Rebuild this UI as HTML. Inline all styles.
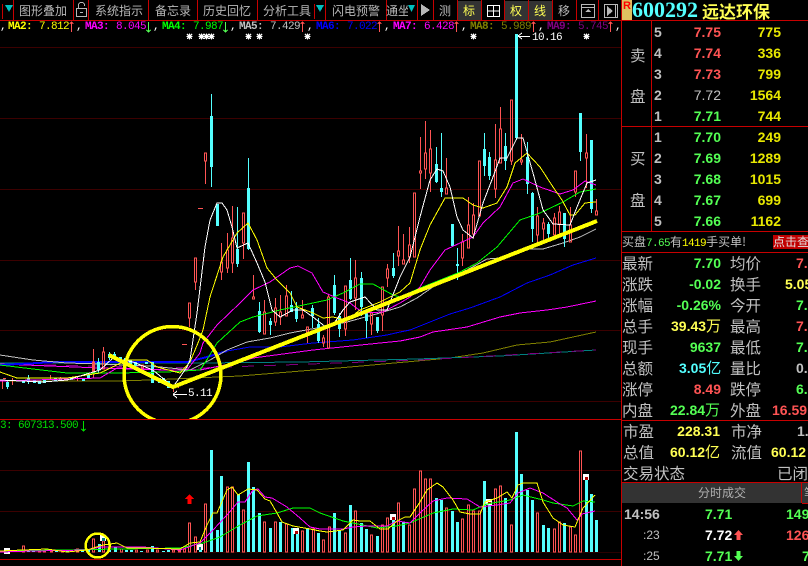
<!DOCTYPE html>
<html><head><meta charset="utf-8"><style>
html,body{margin:0;padding:0;background:#000;width:808px;height:566px;overflow:hidden}
#p{position:relative;width:808px;height:566px;overflow:hidden;background:#000;font-family:"Liberation Sans","WenQuanYi Zen Hei","Noto Sans CJK SC",sans-serif}
#p>div,#p>span{position:absolute;white-space:nowrap}
.c{font-family:"WenQuanYi Zen Hei","Noto Sans CJK SC",sans-serif;color:#c0c0c0;line-height:20px}
.tb{font-size:12px;top:0;height:20px;line-height:21px;color:#b8b8b8}
.l{font-size:15.5px}
.b{font-family:"Liberation Sans",sans-serif;font-weight:bold;font-size:14px;line-height:20px}
.m{font-family:"Liberation Mono",monospace;font-size:11px;letter-spacing:-.6px;line-height:14px;top:20px}
.r{color:#ff5454}.g{color:#54ff54}.y{color:#e8e800}.w{color:#c0c0c0}.yy{color:#ffff54}.cy{color:#54ffff}
</style></head><body><div id="p">
<svg width="808" height="566" style="position:absolute;left:0;top:0" shape-rendering="crispEdges" fill="none">
<defs><clipPath id="ch"><rect x="0" y="0" width="621" height="419"/></clipPath>
<g id="st"><circle r="2.2" fill="#fff"/><path d="M-3 0H3M0-3V3M-2.500-2.500L2.500 2.500M-2.500 2.500L2.500-2.500" stroke="#fff"/></g></defs>
<!-- grid -->
<path d="M0 47.500H621M0 118.500H621M0 189.500H621M0 260.500H621M0 330.500H621M0 401.500H621M0 470.500H621M0 511.500H621" stroke="#3c0000"/>
<path d="M0 552.500H621" stroke="#2a0000"/>
<!-- long MAs -->
<g clip-path="url(#ch)" stroke-width="1">
<polyline stroke="#808000" points="0,381 117,381 150,380 240,376 350,367 450,358 483,353 517,345 550,342 596,332"/>
<polyline stroke="#008080" points="0,363 200,363 300,362 417,359 500,356 596,350"/>
<polyline stroke="#800080" stroke-dasharray="12 10" points="0,364 200,368 420,360 596,350"/>
<polyline stroke="#ff00ff" points="0,364 100,368 167,370 200,370 240,362 253,358 313,350 380,343 400,341 420,337 433,332 467,327 500,317 520,313 547,310 567,307 596,301"/>
<polyline stroke="#0000ff" stroke-width="2" points="0,365 57,362 93,362 157,362 187,362 207,357 227,351"/>
<polyline stroke="#0000ff" points="227,351 250,347 280,347 313,343 353,340 387,335 400,332 410,330 430,322 450,314 470,308 500,297 527,283 550,275 573,265 596,258"/>
<polyline stroke="#c0c0c0" points="0,355 33,360 67,363 100,364 150,366 190,370 210,360 227,350 247,342 270,338 290,333 317,328 347,322 380,313 400,307 417,298 440,282 467,270 487,259 500,258 523,249 543,249 563,243 580,237 596,229"/>
</g>
<!-- candles cyan wicks -->
<path stroke="#54ffff" d="M211.500 94V187M237.500 207V267M248.500 158V250M259.500 302V333M270.500 318V335M291.500 291V312M296.500 302V322M312.500 305V328M318.500 318V343M334.500 275V315M339.500 313V337M350.500 258V300M361.500 272V316M366.500 313V338M377.500 317V333M393.500 253V278M436.500 147V183M441.500 133V197M457.500 248V280M484.500 133V176M489.500 152V180M505.500 133V170M527.500 142V194M532.500 192V242M548.500 222V240M564.500 213V247M580.500 113V161M591.500 140V213M516.500 34V140M7.500 380V389M28.500 375V384M88.500 373V378M98.500 358V373M109.500 352V360M114.500 352V360"/>
<path stroke="#54ffff" stroke-width="3" d="M211.500 116V167M217.500 204V226M237.500 249V264M248.500 188V249M259.500 311V332M270.500 321V325M291.500 305V312M296.500 308V319M312.500 308V316M318.500 324V341M334.500 285V313M339.500 316V329M350.500 280V299M361.500 278V307M366.500 313V321M377.500 317V331M393.500 268V276M436.500 164V182M441.500 188V192M452.500 224V246M457.500 264V266M484.500 149V166M489.500 157V176M505.500 146V161M516.500 34V138M527.500 157V184M532.500 193V229M548.500 224V234M564.500 213V239M580.500 113V152M591.500 140V209
M7.500 382V387M23.500 380V383M28.500 378V382M34.500 380V383M39.500 381V384M44.500 380V383M55.500 378V381M60.500 378V381M71.500 377V380M83.500 378V381M88.500 375V378M98.500 362V370M109.500 354V358M114.500 354V359M120.500 357V362M125.500 358V364M130.500 360V365M135.500 362V366M146.500 362V364M152.500 362V383M159.500 378V383M163.500 378V382M168.500 381V388"/>
<!-- candles red -->
<path stroke="#ff5454" d="M188.500 303h2v15h-2zM189.500 318V327M194.500 258h2v24h-2zM195.500 282V290M204.500 153h2v8h-2zM205.500 161V184M221.500 243V262M220.500 262h2v10h-2zM221.500 272V280M227.500 233V250M226.500 250h2v18h-2zM227.500 268V273M232.500 206V238M231.500 238h2v25h-2zM232.500 263V273M242.500 213h2v30h-2zM243.500 243V259M253.500 275V297M252.500 297h2v2h-2zM264.500 300V312M263.500 312h2v22h-2zM275.500 298V308M274.500 308h2v14h-2zM275.500 322V326M280.500 295V312M279.500 312h2v5h-2zM280.500 317V325M286.500 285V296M285.500 296h2v20h-2zM302.500 300V315M301.500 315h2v3h-2zM306.500 327h2v5h-2zM307.500 332V343M323.500 335V338M322.500 338h2v5h-2zM323.500 343V347M328.500 295V297M327.500 297h2v51h-2zM344.500 286h2v43h-2zM345.500 329V336M355.500 260V278M354.500 278h2v20h-2zM355.500 298V310M370.500 313h2v11h-2zM371.500 324V335M381.500 287h2v28h-2zM382.500 315V331M387.500 264V269M386.500 269h2v9h-2zM387.500 278V287M398.500 226V251M397.500 251h2v5h-2zM398.500 256V266M403.500 234V260M402.500 260h2v4h-2zM409.500 227V245M408.500 245h2v12h-2zM409.500 257V263M413.500 193h2v64h-2zM420.500 137V171M419.500 171h2v2h-2zM420.500 173V189M425.500 121V153M424.500 153h2v16h-2zM425.500 169V179M430.500 130V149M429.500 149h2v24h-2zM430.500 173V192M446.500 158V188M445.500 188h2v6h-2zM462.500 234V242M461.500 242h2v16h-2zM462.500 258V266M468.500 197V225M467.500 225h2v23h-2zM473.500 203V215M472.500 215h2v19h-2zM473.500 234V238M478.500 161h2v55h-2zM495.500 124V160M494.500 160h2v29h-2zM495.500 189V198M500.500 107V129M499.500 129h2v34h-2zM510.500 100h2v61h-2zM511.500 161V165M521.500 134V160M520.500 160h2v2h-2zM521.500 162V165M537.500 207V216M536.500 216h2v19h-2zM537.500 235V242M543.500 218V223M542.500 223h2v6h-2zM543.500 229V241M554.500 213V218M553.500 218h2v17h-2zM554.500 235V239M559.500 206V212M558.500 212h2v12h-2zM559.500 224V235M570.500 207V225M569.500 225h2v17h-2zM574.500 171h2v21h-2zM575.500 192V197M586.500 134V153M585.500 153h2v5h-2zM586.500 158V188M596.500 199V211M595.500 211h2v4h-2z
M2.500 380V389M12.500 378V385M50.500 375V380M60.500 377V381M77.500 376V381M93.500 349V378M92.500 362h2v11h-2zM102.500 352h2v17h-2zM103.500 347V352M141.500 365h2v3h-2zM173.500 386V392M178.500 383V388"/>
<path stroke="#ff5454" d="M198 208.500H203M182 344.500H187M3 378.500H6"/>
<!-- short MAs -->
<g clip-path="url(#ch)">
<polyline stroke="#00ff00" points="0,365 33,369 67,373 117,373 167,372 200,370 208,358 217,343 240,322 253,317 280,310 327,300 343,293 360,284 373,284 393,295 400,297 420,288 440,280 460,272 477,263 497,247 520,220 540,213 563,202 580,192 596,189"/>
<polyline stroke="#ff00ff" points="0,381 67,379 100,378 117,368 167,370 187,370 200,353 203,343 217,325 240,303 253,290 270,282 290,268 298,266 312,273 323,292 337,298 350,303 363,313 383,312 400,303 410,297 420,287 430,270 445,250 460,243 473,237 483,223 500,207 513,183 523,179 540,187 560,194 573,190 585,181 596,185"/>
<polyline stroke="#ffff00" points="0,372 17,378 67,378 100,373 127,360 147,360 157,367 180,373 190,362 198,343 203,330 210,297 223,257 237,233 248,223 257,240 267,268 277,280 290,293 297,307 313,313 323,318 333,317 347,320 360,310 380,302 400,292 410,283 420,250 430,225 445,198 463,198 473,205 483,208 497,203 507,187 515,163 527,153 540,167 553,187 562,200 570,215 575,215 585,203 596,202"/>
<polyline stroke="#ffffff" points="0,380 43,382 67,380 100,370 113,358 133,362 153,370 173,387 187,367 190,360 197,313 205,247 210,220 217,203 222,203 227,210 232,227 237,248 248,243 257,263 265,282 272,310 280,317 293,310 303,310 313,317 327,328 333,325 343,310 350,302 365,297 377,310 387,310 400,277 410,257 420,217 430,180 437,169 443,171 450,187 457,217 463,230 473,238 483,203 493,177 500,158 507,158 517,138 523,138 533,173 543,210 553,224 570,225 577,207 587,183 596,180"/>
<!-- drawn overlays -->
<circle cx="172.500" cy="375" r="48.500" stroke="#ffff00" stroke-width="3.500"/>
<path d="M109 355L173 387L597 221" stroke="#ffff00" stroke-width="4"/>
</g>
<path stroke="#fff" d="M173 394.500H187M173 394.500L177 391M173 394.500L177 398M518 36L522 33M518 36L522 39M518 36.500H530"/>
<!-- legend arrows -->
<path stroke="#ff5454" d="M71.500 22V32M69.500 24L71.500 22L73.500 24M302.500 22V32M300.500 24L302.500 22L304.500 24M379.500 22V32M377.500 24L379.500 22L381.500 24M456.500 22V32M454.500 24L456.500 22L458.500 24M533.500 22V32M531.500 24L533.500 22L535.500 24M610.500 22V32M608.500 24L610.500 22L612.500 24"/>
<path stroke="#54ff54" d="M148.500 22V32M146.500 30L148.500 32L150.500 30M225.500 22V32M223.500 30L225.500 32L227.500 30"/>
<path stroke="#00e000" d="M83.500 421V431M81.500 429L83.500 431L85.500 429"/>
<!-- stars -->
<use href="#st" x="189.500" y="36.500"/><use href="#st" x="201.500" y="36.500"/><use href="#st" x="206.500" y="36.500"/><use href="#st" x="211.500" y="36.500"/><use href="#st" x="248.500" y="36.500"/><use href="#st" x="259.500" y="36.500"/><use href="#st" x="307.500" y="36.500"/><use href="#st" x="473.500" y="36.500"/><use href="#st" x="586.500" y="36.500"/>
<!-- volume cyan -->
<path stroke="#54ffff" stroke-width="3" d="M28.500 551V552M33.500 551V552M56.500 551V552M67.500 551V552M72.500 551V552M82.500 551V552M88.500 549V552M99.500 544V552M109.500 550V552M115.500 547V552M126.500 550V552M131.500 550V552M141.500 551V552M152.500 546V552M163.500 551V552M168.500 550V552M200.500 545V552M211.500 450V552M217.500 530V552M221.500 476V552M238.500 494V552M248.500 462V552M253.500 487V552M259.500 513V552M270.500 528V552M280.500 522V552M292.500 528V552M297.500 530V552M307.500 528V552M318.500 533V552M334.500 513V552M339.500 531V552M350.500 505V552M361.500 523V552M366.500 529V552M377.500 536V552M393.500 520V552M403.500 522V552M436.500 498V552M441.500 500V552M452.500 511V552M457.500 522V552M484.500 481V552M489.500 502V552M505.500 498V552M516.500 432V552M521.500 474V552M527.500 490V552M532.500 500V552M543.500 525V552M548.500 528V552M564.500 523V552M586.500 480V552M591.500 494V552M596.500 520V552"/>
<!-- volume red -->
<path stroke="#ff5454" d="M22.500 546h2v6h-2zM38.500 550h2v2h-2zM43.500 551h2v1h-2zM50.500 551h2v1h-2zM61.500 551h2v1h-2zM76.500 549h2v3h-2zM92.500 539h2v13h-2zM102.500 541h2v11h-2zM120.500 549h2v3h-2zM135.500 550h2v2h-2zM146.500 550h2v2h-2zM156.500 550h2v2h-2zM172.500 550h2v2h-2zM178.500 551h2v1h-2zM183.500 549h2v3h-2zM188.500 523h2v29h-2zM194.500 537h2v15h-2zM204.500 504h2v48h-2zM226.500 487h2v65h-2zM231.500 487h2v65h-2zM242.500 510h2v42h-2zM263.500 522h2v30h-2zM274.500 522h2v30h-2zM285.500 524h2v28h-2zM301.500 531h2v21h-2zM312.500 529h2v23h-2zM322.500 540h2v12h-2zM328.500 527h2v25h-2zM344.500 533h2v19h-2zM354.500 511h2v41h-2zM370.500 535h2v17h-2zM381.500 525h2v27h-2zM386.500 518h2v34h-2zM397.500 503h2v49h-2zM408.500 525h2v27h-2zM413.500 489h2v63h-2zM419.500 471h2v81h-2zM424.500 479h2v73h-2zM429.500 479h2v73h-2zM445.500 508h2v44h-2zM461.500 519h2v33h-2zM467.500 505h2v47h-2zM472.500 511h2v41h-2zM478.500 511h2v41h-2zM494.500 489h2v63h-2zM499.500 486h2v66h-2zM510.500 525h2v27h-2zM536.500 513h2v39h-2zM553.500 529h2v23h-2zM558.500 522h2v30h-2zM569.500 527h2v25h-2zM574.500 535h2v17h-2zM579.500 451h2v101h-2z"/>
<!-- vol markers -->
<path fill="#fff" d="M4 548h6v6h-6zM100 535h6v6h-6zM197 544h6v6h-6zM293 528h6v6h-6zM390 514h6v6h-6zM486 499h6v6h-6zM583 474h6v6h-6z"/>
<path fill="#b00000" d="M295 531h3v3h-3zM392 517h3v3h-3zM488 502h3v2h-3zM585 477h3v3h-3z"/>
<path fill="#008080" d="M102 538h3v3h-3zM199 547h2v3h-2z"/>
<!-- vol MAs -->
<polyline stroke="#00ff00" points="0,551 180,548 203,543 220,537 240,525 257,516 277,513 293,508 310,508 320,513 343,521 353,523 377,528 397,526 410,523 433,513 453,509 473,510 487,504 510,500 523,495 543,500 553,503 573,506 583,501 595,502"/>
<polyline stroke="#ff00ff" points="0,552 33,551 87,550 100,547 120,547 143,547 180,550 200,543 213,530 227,515 238,502 245,502 253,490 258,489 265,497 272,498 287,507 300,518 310,527 320,529 343,529 353,527 367,526 387,526 397,521 410,523 420,513 433,501 447,498 467,499 480,507 497,505 510,503 518,493 530,488 543,493 560,504 567,508 577,520 582,514 595,511"/>
<polyline stroke="#ffff00" points="0,551 23,550 47,549 67,552 87,550 103,545 117,543 127,548 143,548 180,549 190,543 200,542 207,525 213,513 217,513 227,490 232,487 238,495 248,489 257,490 265,499 270,501 277,513 282,522 293,526 310,529 320,531 327,532 343,530 353,520 360,521 370,521 380,529 388,529 397,521 405,517 410,517 420,502 427,490 437,483 443,487 453,500 460,512 470,514 480,514 485,502 497,498 507,492 512,498 518,485 523,483 537,483 543,502 553,518 563,525 575,527 583,508 595,495"/>
<circle cx="97.700" cy="545.500" r="12" stroke="#ffff00" stroke-width="2.500"/>
<path fill="#ff0000" d="M189.500 494L194 499H191.500V504H187.500V499H185z"/>
<!-- main separators -->
<path stroke="#c80000" d="M0 419.500H621M0 559.500H621M0 20.500H808M621.500 0V566M651.500 20V231M622 126.500H808M622 231.500H808M622 252.500H808M622 420.500H808"/>
<path stroke="#c80000" d="M2.500 4V19M13.500 0V20M73.500 0V20M88.500 0V20M148.500 0V20M197.500 0V20M257.500 0V20M314.500 4V19M325.500 0V20M386.500 0V20M417.500 0V20M433.500 0V20M457.500 0V20M481.500 0V20M504.500 0V20M528.500 0V20M552.500 0V20M576.500 0V20M598.500 0V20"/>
<!-- toolbar icons -->
<path fill="#00c0c0" d="M5 5H13L9 12zM316 5H324L320 12zM408 5H415L411.500 12z"/>
<path stroke="#b8b8b8" fill="none" d="M78.500 8.500V5C78.500 1.500 84.500 1.500 84.500 5V6M76.500 8.500H86.500V16.500H76.500zM80 12.500H83"/>
<path fill="#b8b8b8" d="M421 4L430 10L421 16z"/>
<rect x="458" y="1" width="23" height="19" fill="#333"/><rect x="505" y="1" width="23" height="19" fill="#333"/><rect x="529" y="1" width="23" height="19" fill="#333"/>
<path stroke="#fff" d="M487.500 5.500H499.500V16.500H487.500zM493.500 5V16M488 11H499"/>
<path stroke="#b8b8b8" d="M581.500 4.500H594.500V17.500H581.500zM581 7.500H594"/>
<path fill="#b8b8b8" d="M588 9L591 12H585z"/>
<path stroke="#b8b8b8" d="M604.500 4.500H617.500V17.500H604.500zM615.500 5V17"/>
<path fill="#b8b8b8" d="M607 6L613 11L607 16z"/>
<!-- tab bar -->
<rect x="622" y="483" width="186" height="20" fill="#333"/>
<path stroke="#c80000" d="M622 482.500H808M801.500 483V503M802 503.500H808"/>
<rect x="622" y="0" width="10" height="20" fill="#e0c060"/>
<rect x="773" y="235" width="35" height="14" fill="#c00000"/>
</svg>

<!-- toolbar text -->
<div class="c tb" style="left:19px">图形叠加</div>
<div class="c tb" style="left:95px">系统指示</div>
<div class="c tb" style="left:155px">备忘录</div>
<div class="c tb" style="left:203px">历史回忆</div>
<div class="c tb" style="left:263px">分析工具</div>
<div class="c tb" style="left:332px">闪电预警</div>
<div class="c tb" style="left:386px;width:22px;overflow:hidden">通坐</div>
<div class="c tb" style="left:439px">测</div>
<div class="c tb" style="left:463px;color:#ffff54">标</div>
<div class="c tb" style="left:510px;color:#ffff54">权</div>
<div class="c tb" style="left:534px;color:#ffff54">线</div>
<div class="c tb" style="left:558px">移</div>

<!-- MA legend -->
<span class="m" style="left:0;color:#fff">,</span>
<span class="m" style="left:8px;color:#ffff00"><b>MA2:</b></span><span class="m" style="left:39px;color:#ffff00">7.812</span><span class="m" style="left:76px;color:#fff">,</span>
<span class="m" style="left:85px;color:#ff00ff"><b>MA3:</b></span><span class="m" style="left:116px;color:#ff00ff">8.045</span><span class="m" style="left:153px;color:#fff">,</span>
<span class="m" style="left:162px;color:#00ff00"><b>MA4:</b></span><span class="m" style="left:193px;color:#00ff00">7.987</span><span class="m" style="left:230px;color:#fff">,</span>
<span class="m" style="left:239px;color:#c0c0c0"><b>MA5:</b></span><span class="m" style="left:270px;color:#c0c0c0">7.429</span><span class="m" style="left:307px;color:#fff">,</span>
<span class="m" style="left:316px;color:#0000ff"><b>MA6:</b></span><span class="m" style="left:347px;color:#0000ff">7.022</span><span class="m" style="left:384px;color:#fff">,</span>
<span class="m" style="left:393px;color:#ff00ff"><b>MA7:</b></span><span class="m" style="left:424px;color:#ff00ff">6.428</span><span class="m" style="left:461px;color:#fff">,</span>
<span class="m" style="left:470px;color:#808000"><b>MA8:</b></span><span class="m" style="left:501px;color:#808000">5.989</span><span class="m" style="left:538px;color:#fff">,</span>
<span class="m" style="left:547px;color:#800080"><b>MA9:</b></span><span class="m" style="left:578px;color:#800080">5.745</span><span class="m" style="left:615px;color:#fff">,</span>
<span class="m" style="left:532px;top:31px;color:#fff">10.16</span>
<span class="m" style="left:188px;top:387px;color:#fff">5.11</span>
<span class="m" style="left:0;top:419px;color:#00e000">3:</span><span class="m" style="left:18px;top:419px;color:#00e000;letter-spacing:-.6px">607313.500</span>

<!-- header -->
<span style="left:623px;top:-1px;font:bold 11px/14px 'Liberation Sans',sans-serif;color:#ff0000">R</span>
<span style="left:632px;top:-2px;font:bold 22px/24px 'Liberation Serif',serif;color:#54ffff">600292</span>
<span class="c" style="left:702px;top:0;font-size:17px;line-height:21px;color:#ffff54;font-weight:bold">远达环保</span>

<!-- order book -->
<span class="c l" style="left:630px;top:45px">卖</span><span class="c l" style="left:630px;top:86px">盘</span>
<span class="c l" style="left:630px;top:148px">买</span><span class="c l" style="left:630px;top:190px">盘</span>

<span class="b w" style="left:654px;top:22px">5</span><span class="b r" style="right:87px;top:22px">7.75</span><span class="b y" style="right:27px;top:22px">775</span>
<span class="b w" style="left:654px;top:43px">4</span><span class="b r" style="right:87px;top:43px">7.74</span><span class="b y" style="right:27px;top:43px">336</span>
<span class="b w" style="left:654px;top:64px">3</span><span class="b r" style="right:87px;top:64px">7.73</span><span class="b y" style="right:27px;top:64px">799</span>
<span class="b w" style="left:654px;top:85px">2</span><span class="b w" style="right:87px;top:85px;font-weight:normal">7.72</span><span class="b y" style="right:27px;top:85px">1564</span>
<span class="b w" style="left:654px;top:106px">1</span><span class="b g" style="right:87px;top:106px">7.71</span><span class="b y" style="right:27px;top:106px">744</span>

<span class="b w" style="left:654px;top:127px">1</span><span class="b g" style="right:87px;top:127px">7.70</span><span class="b y" style="right:27px;top:127px">249</span>
<span class="b w" style="left:654px;top:148px">2</span><span class="b g" style="right:87px;top:148px">7.69</span><span class="b y" style="right:27px;top:148px">1289</span>
<span class="b w" style="left:654px;top:169px">3</span><span class="b g" style="right:87px;top:169px">7.68</span><span class="b y" style="right:27px;top:169px">1015</span>
<span class="b w" style="left:654px;top:190px">4</span><span class="b g" style="right:87px;top:190px">7.67</span><span class="b y" style="right:27px;top:190px">699</span>
<span class="b w" style="left:654px;top:211px">5</span><span class="b g" style="right:87px;top:211px">7.66</span><span class="b y" style="right:27px;top:211px">1162</span>

<!-- buy notice -->
<span class="c" style="left:622px;top:232px;font-size:12px">买盘<span style="font:11px 'Liberation Mono',monospace;letter-spacing:-.6px;color:#54ff54">7.65</span>有<span style="font:11px 'Liberation Mono',monospace;letter-spacing:-.6px;color:#ffff00">1419</span>手买单!</span>
<span class="c" style="left:773px;top:232px;font-size:12px;color:#e0e0e0">点击查</span>

<!-- stats -->
<span class="c l" style="left:622px;top:253px">最新</span><span class="b g" style="right:87px;top:253px">7.70</span><span class="c l" style="left:730px;top:253px">均价</span><span class="b r" style="left:796px;top:253px">7.</span>
<span class="c l" style="left:622px;top:274px">涨跌</span><span class="b g" style="right:87px;top:274px">-0.02</span><span class="c l" style="left:730px;top:274px">换手</span><span class="b yy" style="left:785px;top:274px">5.05</span>
<span class="c l" style="left:622px;top:295px">涨幅</span><span class="b g" style="right:87px;top:295px">-0.26%</span><span class="c l" style="left:730px;top:295px">今开</span><span class="b g" style="left:796px;top:295px">7.</span>
<span class="c l" style="left:622px;top:316px">总手</span><span class="b yy" style="left:671px;top:316px">39.43<span class="c" style="font-size:15px;font-weight:normal;color:#ffff54">万</span></span><span class="c l" style="left:730px;top:316px">最高</span><span class="b r" style="left:796px;top:316px">7.</span>
<span class="c l" style="left:622px;top:337px">现手</span><span class="b g" style="right:87px;top:337px">9637</span><span class="c l" style="left:730px;top:337px">最低</span><span class="b g" style="left:796px;top:337px">7.</span>
<span class="c l" style="left:622px;top:358px">总额</span><span class="b cy" style="left:679px;top:358px">3.05<span class="c" style="font-size:15px;font-weight:normal;color:#54ffff">亿</span></span><span class="c l" style="left:730px;top:358px">量比</span><span class="b w" style="left:796px;top:358px">0.</span>
<span class="c l" style="left:622px;top:379px">涨停</span><span class="b r" style="right:87px;top:379px">8.49</span><span class="c l" style="left:730px;top:379px">跌停</span><span class="b g" style="left:796px;top:379px">6.</span>
<span class="c l" style="left:622px;top:400px">内盘</span><span class="b g" style="left:670px;top:400px">22.84<span class="c" style="font-size:15px;font-weight:normal;color:#54ff54">万</span></span><span class="c l" style="left:730px;top:400px">外盘</span><span class="b r" style="left:772px;top:400px">16.59</span>

<span class="c l" style="left:623px;top:421px">市盈</span><span class="b yy" style="right:88px;top:421px">228.31</span><span class="c l" style="left:731px;top:421px">市净</span><span class="b w" style="left:797px;top:421px">1.</span>
<span class="c l" style="left:623px;top:442px">总值</span><span class="b yy" style="left:670px;top:442px">60.12<span class="c" style="font-size:15px;font-weight:normal;color:#ffff54">亿</span></span><span class="c l" style="left:731px;top:442px">流值</span><span class="b yy" style="left:771px;top:442px">60.12</span>
<span class="c l" style="left:623px;top:463px">交易状态</span><span class="c l" style="left:777px;top:463px">已闭</span>

<span class="c" style="left:698px;top:483px;font-size:12px;color:#b0b0b0">分时成交</span>
<span class="c" style="left:804px;top:483px;font-size:12px;color:#b0b0b0">笔</span>

<span class="b w" style="left:624px;top:504px">14:56</span><span class="b g" style="left:705px;top:504px">7.71</span><span class="b g" style="left:786px;top:504px">149</span>
<span class="w" style="left:643px;top:528px;font-size:12px;line-height:14px">:23</span><span class="b" style="left:705px;top:525px;color:#fff">7.72</span><span class="b r" style="left:786px;top:525px">126</span>
<span class="w" style="left:643px;top:549px;font-size:12px;line-height:14px">:25</span><span class="b g" style="left:705px;top:546px">7.71</span><span class="b g" style="left:802px;top:546px">7</span>
<svg width="12" height="12" style="position:absolute;left:733px;top:530px"><path fill="#ff5454" d="M5.500 0L10 5H7.500V10H3.500V5H1z"/></svg>
<svg width="12" height="12" style="position:absolute;left:733px;top:551px"><path fill="#54ff54" d="M5.500 10L10 5H7.500V0H3.500V5H1z"/></svg>
</div></body></html>
